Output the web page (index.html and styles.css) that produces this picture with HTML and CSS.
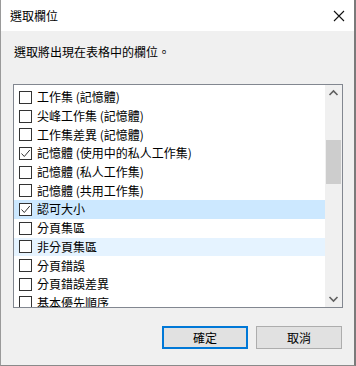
FILE: index.html
```html
<!DOCTYPE html>
<html lang="zh-Hant">
<head>
<meta charset="utf-8">
<link rel="stylesheet" href="styles.css">
</head>
<body>
<div class="dialog">
  <div class="titlebar">
    <span class="title">選取欄位</span>
    <svg class="close" width="12" height="12" viewBox="0 0 12 12"><path d="M1 1L11 11M11 1L1 11" stroke="#111" stroke-width="1.1" fill="none"/></svg>
  </div>
  <div class="content">
    <p class="prompt">選取將出現在表格中的欄位。</p>
    <div class="listbox">
      <ul class="items">
        <li class="row"><span class="cb"></span>工作集 (記憶體)</li>
        <li class="row"><span class="cb"></span>尖峰工作集 (記憶體)</li>
        <li class="row"><span class="cb"></span>工作集差異 (記憶體)</li>
        <li class="row"><span class="cb checked"><svg width="11" height="11" viewBox="0 0 11 11"><path d="M1.5 5.5L4.3 8.5L9.8 2" stroke="#333" stroke-width="1" fill="none"/></svg></span>記憶體 (使用中的私人工作集)</li>
        <li class="row"><span class="cb"></span>記憶體 (私人工作集)</li>
        <li class="row"><span class="cb"></span>記憶體 (共用工作集)</li>
        <li class="row selected"><span class="cb checked"><svg width="11" height="11" viewBox="0 0 11 11"><path d="M1.5 5.5L4.3 8.5L9.8 2" stroke="#333" stroke-width="1" fill="none"/></svg></span>認可大小</li>
        <li class="row"><span class="cb"></span>分頁集區</li>
        <li class="row hover"><span class="cb"></span>非分頁集區</li>
        <li class="row"><span class="cb"></span>分頁錯誤</li>
        <li class="row"><span class="cb"></span>分頁錯誤差異</li>
        <li class="row"><span class="cb"></span>基本優先順序</li>
      </ul>
      <div class="scrollbar">
        <svg class="arrow" width="17" height="17" viewBox="0 0 17 17"><path d="M4.5 10L8.5 6L12.5 10" stroke="#606060" stroke-width="1.6" fill="none"/></svg>
        <div class="track"><div class="thumb"></div></div>
        <svg class="arrow" width="17" height="17" viewBox="0 0 17 17"><path d="M4.5 7L8.5 11L12.5 7" stroke="#606060" stroke-width="1.6" fill="none"/></svg>
      </div>
    </div>
    <div class="buttons">
      <button class="btn default">確定</button>
      <button class="btn">取消</button>
    </div>
  </div>
</div>
</body>
</html>
```

FILE: styles.css
```css
* { box-sizing: border-box; }
html, body {
  margin: 0;
  padding: 0;
  width: 356px;
  height: 366px;
  overflow: hidden;
  background: #f0f0f0;
  font-family: "Noto Sans CJK TC", "Noto Sans", sans-serif;
  font-size: 12px;
  color: #000;
}
.dialog {
  width: 356px;
  height: 366px;
  border-left: 1px solid #9a9a9a;
  border-right: 2px solid #7a7a7a;
  border-bottom: 1px solid #8a8a8a;
  display: flex;
  flex-direction: column;
}
.titlebar {
  height: 31px;
  background: #fff;
  display: flex;
  align-items: center;
  justify-content: space-between;
  padding: 0 9px 0 9px;
  flex: none;
}
.title {
  font-size: 12px;
  line-height: 16px;
}
.close { display: block; }
.content {
  flex: 1;
  display: flex;
  flex-direction: column;
  padding: 13px 0 0 12px;
}
.prompt {
  margin: 0 0 0 1px;
  line-height: 16px;
  height: 16px;
}
.listbox {
  margin-top: 24px;
  width: 330px;
  height: 224px;
  border: 1px solid #828790;
  background: #fff;
  display: flex;
}
.items {
  list-style: none;
  margin: 0;
  padding: 3px 0 0 0;
  flex: 1;
  overflow: hidden;
}
.row {
  height: 18.7px;
  display: flex;
  align-items: center;
  padding-left: 5px;
  white-space: nowrap;
  line-height: 16px;
}
.row.selected { background: #cce8ff; }
.row.hover { background: #e5f3ff; }
.cb {
  width: 13px;
  height: 13px;
  border: 1px solid #333;
  background: #fff;
  margin-right: 5px;
  flex: none;
  display: flex;
  align-items: center;
  justify-content: center;
}
.cb svg { display: block; }
.scrollbar {
  width: 17px;
  flex: none;
  background: #f0f0f0;
  display: flex;
  flex-direction: column;
}
.arrow { display: block; flex: none; }
.track {
  flex: 1;
  padding: 38px 1px 0 1px;
}
.thumb {
  height: 44px;
  background: #cdcdcd;
}
.buttons {
  display: flex;
  justify-content: flex-end;
  gap: 8px;
  margin-top: 18px;
  padding-right: 12px;
}
.btn {
  width: 86px;
  height: 23px;
  background: #e1e1e1;
  border: 1px solid #adadad;
  font-family: "Noto Sans CJK TC", "Noto Sans", sans-serif;
  font-size: 12px;
  color: #000;
  padding: 0;
  line-height: 16px;
}
.btn.default {
  border: 2px solid #0078d7;
}
```
